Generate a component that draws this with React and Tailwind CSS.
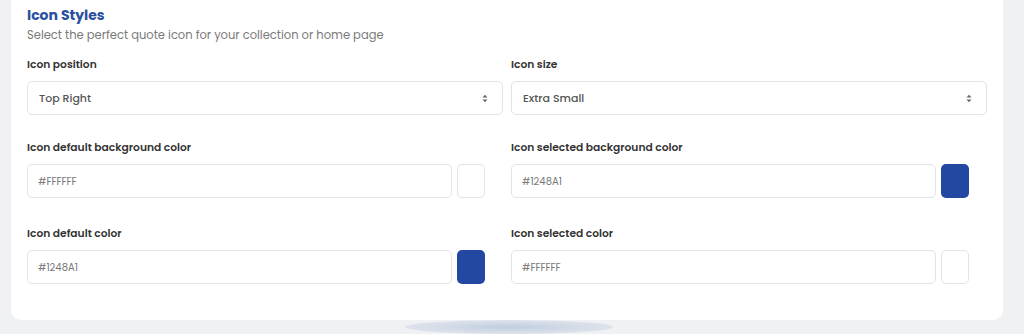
import React from "react";

const font = { fontFamily: "Poppins, Inter, 'Open Sans', sans-serif" };

function SelectBox({ value }) {
  return (
    <div className="flex h-[34px] items-center justify-between rounded-[5px] border border-[#e3e3e3] bg-white pl-[11px] pr-[14px]">
      <span className="text-[11px] font-medium text-[#555]">{value}</span>
      <svg width="6" height="9" viewBox="0 0 6 9" className="text-[#666]">
        <path d="M0.5 3.5 L3 0.8 L5.5 3.5 Z" fill="currentColor" />
        <path d="M0.5 5.5 L3 8.2 L5.5 5.5 Z" fill="currentColor" />
      </svg>
    </div>
  );
}

function ColorField({ value, swatch }) {
  const filled = swatch !== "#FFFFFF";
  return (
    <div className="flex w-[458px] gap-[5px]">
      <div className="flex h-[34px] flex-1 items-center rounded-[5px] border border-[#e3e3e3] bg-white pl-[10px]">
        <span className="text-[10px] text-[#777]">{value}</span>
      </div>
      <div
        className={
          filled
            ? "h-[34px] w-[28px] rounded-[5px] bg-[#2348a1]"
            : "h-[34px] w-[28px] rounded-[5px] border border-[#e3e3e3] bg-white"
        }
      />
    </div>
  );
}

function Field({ label, children }) {
  return (
    <div className="flex flex-col">
      <div className="mb-[8px] text-[10.7px] font-semibold leading-[16px] text-[#333]">{label}</div>
      {children}
    </div>
  );
}

export default function App() {
  return (
    <div className="relative h-[334px] w-[1024px] overflow-hidden bg-[#f0f1f3]" style={font}>
      <div className="ml-[11px] mr-[21px] rounded-b-[10px] bg-white px-[16px] pb-[36px] pt-[5px]">
        <div className="text-[14px] font-bold leading-[20px] text-[#2a4f9f]">Icon Styles</div>
        <div className="mt-[2px] text-[11.5px] leading-[16px] text-[#7a7a7a]">
          Select the perfect quote icon for your collection or home page
        </div>
        <div className="mt-[14px] grid grid-cols-2 gap-x-[8px]">
          <Field label="Icon position">
            <SelectBox value="Top Right" />
          </Field>
          <Field label="Icon size">
            <SelectBox value="Extra Small" />
          </Field>
        </div>
        <div className="mt-[25px] grid grid-cols-2 gap-x-[8px]">
          <Field label="Icon default background color">
            <ColorField value="#FFFFFF" swatch="#FFFFFF" />
          </Field>
          <Field label="Icon selected background color">
            <ColorField value="#1248A1" swatch="#1248A1" />
          </Field>
        </div>
        <div className="mt-[28px] grid grid-cols-2 gap-x-[8px]">
          <Field label="Icon default color">
            <ColorField value="#1248A1" swatch="#1248A1" />
          </Field>
          <Field label="Icon selected color">
            <ColorField value="#FFFFFF" swatch="#FFFFFF" />
          </Field>
        </div>
      </div>
      <div className="absolute left-[405px] top-[320px] h-[14px] w-[208px] rounded-[50%] bg-[radial-gradient(ellipse_at_center,#bfcde0_0%,#d6dde8_50%,#e8ebef_100%)]" />
    </div>
  );
}
